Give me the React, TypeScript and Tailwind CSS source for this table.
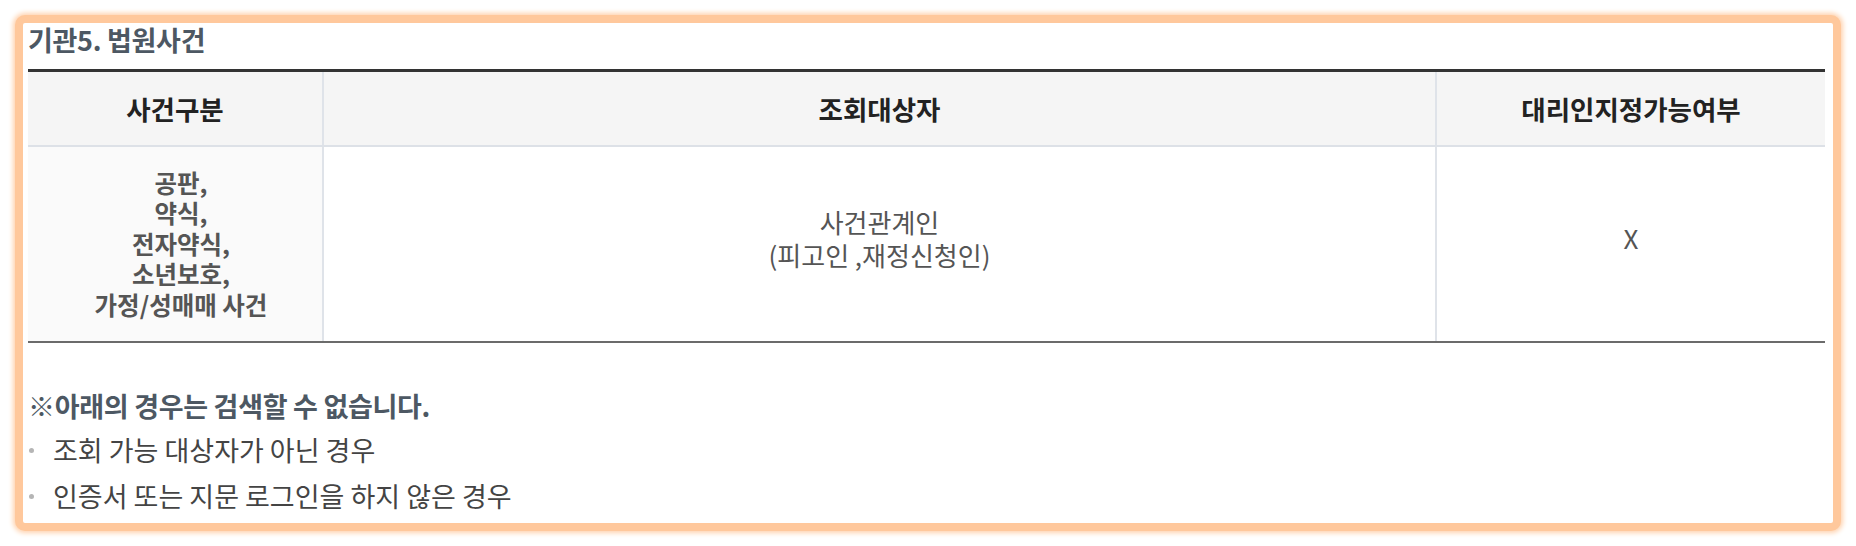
const font = { fontFamily: '"Noto Sans CJK KR", "Noto Sans", sans-serif' };

const caseTypes = ['공판,', '약식,', '전자약식,', '소년보호,', '가정/성매매 사건'];

const notices = ['조회 가능 대상자가 아닌 경우', '인증서 또는 지문 로그인을 하지 않은 경우'];

export default function App() {
  return (
    <div className="w-[1856px] h-[546px] bg-white pt-[15px] pl-[15px]" style={font}>
      {/* Orange highlight frame */}
      <div className="w-[1826px] h-[516px] border-[8px] border-[#ffc89c] rounded-[10px] shadow-[0_0_5px_2px_#ffd2ae] bg-white">
        <div className="h-full pl-[5px] pr-[8px]">
          <h2 className="pt-[1px] mb-[13px] h-[33px] text-[27px] leading-[32px] font-bold tracking-[-0.3px] text-[#4d5863]">
            기관5. 법원사건
          </h2>

          {/* Table */}
          <div className="border-t-[3px] border-[#333] border-b-[2px] border-b-[#6b6b6b]">
            <div className="flex h-[75px] bg-[#f5f5f5] border-b-[2px] border-[#dde1e7] text-[26.5px] font-bold text-[#222]">
              <div className="w-[294px] flex items-center justify-center">사건구분</div>
              <div className="w-[1113px] flex items-center justify-center border-l-[2px] border-[#dfe3e9]">조회대상자</div>
              <div className="flex-1 flex items-center justify-center border-l-[2px] border-[#dfe3e9]">대리인지정가능여부</div>
            </div>
            <div className="flex h-[194px]">
              <div className="w-[294px] flex flex-col items-center justify-center bg-[#fafafa] text-[24.5px] leading-[30.5px] font-bold text-[#555] pl-[12px]">
                {caseTypes.map((t) => (
                  <span key={t}>{t}</span>
                ))}
              </div>
              <div className="w-[1113px] flex flex-col items-center justify-center border-l-[2px] border-[#dfe3e9] text-[26px] leading-[33px] text-[#555] pb-[12px]">
                <span>사건관계인</span>
                <span>(피고인 ,재정신청인)</span>
              </div>
              <div className="flex-1 flex items-center justify-center border-l-[2px] border-[#dfe3e9] text-[26px] text-[#555] pb-[14px]">
                X
              </div>
            </div>
          </div>

          {/* Notice */}
          <div className="mt-[47px]">
            <p className="text-[27px] leading-[32px] font-bold text-[#4d5863] tracking-[-0.3px]">
              ※아래의 경우는 검색할 수 없습니다.
            </p>
            <ul className="mt-[5px]">
              {notices.map((n) => (
                <li key={n} className="flex items-center h-[46px] text-[27px] text-[#444]">
                  <span className="w-[5px] h-[5px] rounded-full bg-[#b5b5b5] ml-[1px] mr-[19px]" />
                  {n}
                </li>
              ))}
            </ul>
          </div>
        </div>
      </div>
    </div>
  );
}
